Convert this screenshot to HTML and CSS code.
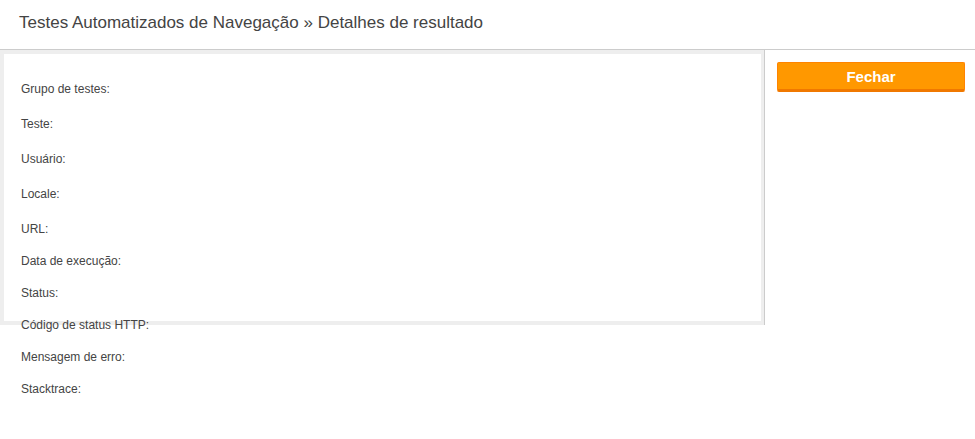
FILE: index.html
```html
<!DOCTYPE html>
<html lang="pt-BR">
<head>
  <meta charset="UTF-8">
  <title>Detalhes de resultado</title>
  <link rel="stylesheet" href="styles.css">
</head>
<body>
  <div class="header">
    <h1>Testes Automatizados de Navegação <span class="sep">»</span> Detalhes de resultado</h1>
  </div>

  <div class="main">
    <div class="panel">
      <div class="details">
        <div class="field tall"><span class="label">Grupo de testes:</span> <span class="value"></span></div>
        <div class="field tall"><span class="label">Teste:</span> <span class="value"></span></div>
        <div class="field tall"><span class="label">Usuário:</span> <span class="value"></span></div>
        <div class="field tall"><span class="label">Locale:</span> <span class="value"></span></div>
        <div class="field"><span class="label">URL:</span> <span class="value"></span></div>
        <div class="field"><span class="label">Data de execução:</span> <span class="value"></span></div>
        <div class="field"><span class="label">Status:</span> <span class="value"></span></div>
        <div class="field"><span class="label">Código de status HTTP:</span> <span class="value"></span></div>
        <div class="field"><span class="label">Mensagem de erro:</span> <span class="value"></span></div>
        <div class="field"><span class="label">Stacktrace:</span> <span class="value"></span></div>
      </div>
    </div>

    <div class="actions">
      <button type="button" class="btn-close">Fechar</button>
    </div>
  </div>
</body>
</html>
```

FILE: styles.css
```css
html, body {
  min-height: 100vh;
}

body {
  margin: 0;
  background: #fff;
  color: #444;
  font-family: "Liberation Sans", Arial, sans-serif;
}

.header {
  padding: 13px 19px 17px;
  border-bottom: 1px solid #ccc;
}

.header h1 {
  margin: 0;
  font-size: 17px;
  font-weight: normal;
  line-height: 19px;
  color: #444;
}

.main {
  display: flex;
  align-items: flex-start;
}

.panel {
  width: 757px;
  padding: 4px 3px 4px 4px;
  background: #eee;
  border-right: 1px solid #ccc;
}

/* fixed height box, the list runs out of it */
.details {
  position: relative;
  height: 267px;
  box-sizing: border-box;
  padding: 28px 17px 0;
  background: #fff;
}

.field {
  position: relative;
  z-index: 1;
  height: 32px;
  font-size: 12px;
  line-height: 14px;
}

.field.tall {
  height: 35px;
}

.actions {
  flex: 1;
  padding: 12px 10px 0 12px;
}

.btn-close {
  display: block;
  width: 100%;
  height: 30px;
  padding: 0;
  background: #ff9800;
  border: 1px solid #ff8400;
  border-bottom: 3px solid #f07800;
  border-radius: 2px;
  color: #fff;
  font-family: "Liberation Sans", Arial, sans-serif;
  font-size: 15px;
  font-weight: bold;
  cursor: pointer;
}
```
